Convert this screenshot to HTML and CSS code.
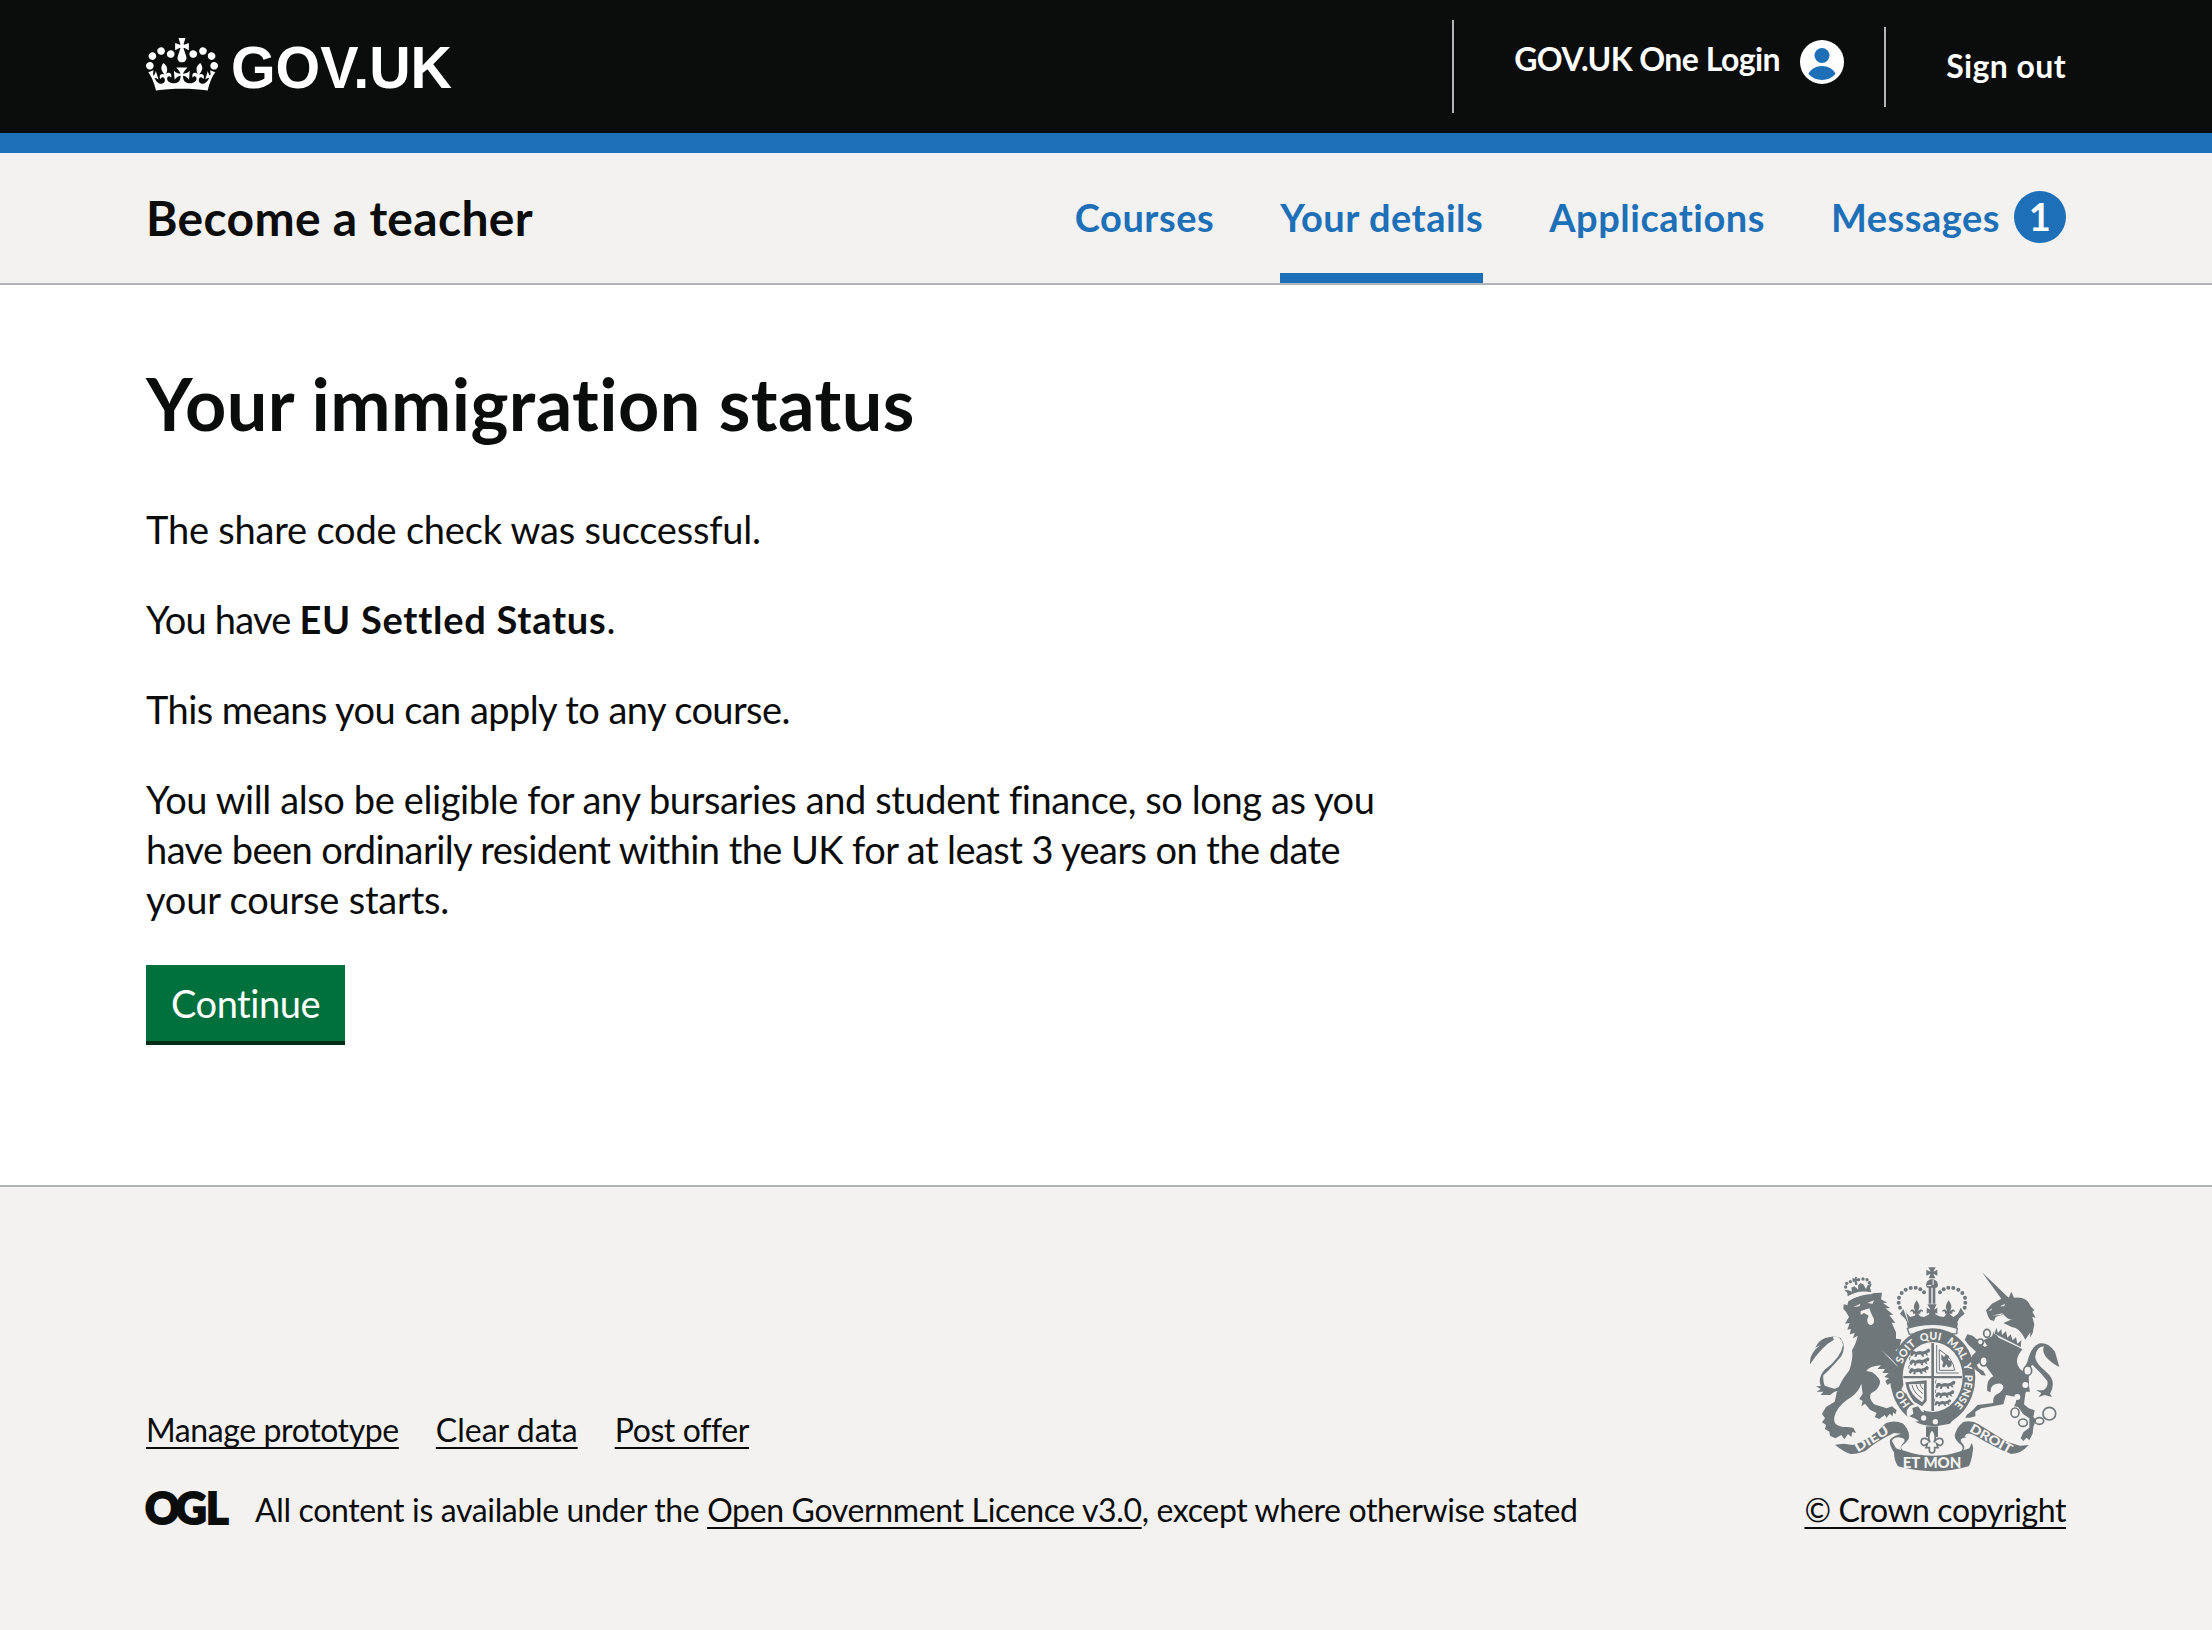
FILE: index.html
```
<!DOCTYPE html>
<html lang="en">
<head>
<meta charset="utf-8">
<title>Your immigration status – Become a teacher</title>
<link rel="stylesheet" href="styles.css">
</head>
<body>
<header class="header">
  <div class="container header-row">
    <a class="logo" href="#" aria-label="GOV.UK">
      <svg class="crown" viewBox="0 0 132 97" aria-hidden="true"><path fill="currentColor" fill-rule="evenodd" d="M25 30.2c3.5 1.5 7.7-.2 9.1-3.7 1.5-3.6-.2-7.8-3.9-9.2-3.6-1.4-7.6.3-9.1 3.9-1.4 3.5.3 7.5 3.9 9zM9 39.5c3.6 1.5 7.8-.2 9.2-3.7 1.5-3.6-.2-7.8-3.9-9.1-3.6-1.5-7.6.2-9.1 3.8-1.4 3.5.3 7.5 3.8 9zM4.4 57.2c3.5 1.5 7.7-.2 9.1-3.8 1.5-3.6-.2-7.7-3.9-9.1-3.5-1.5-7.6.3-9.1 3.8-1.4 3.5.3 7.6 3.9 9.1zm38.3-21.4c3.5 1.5 7.7-.2 9.1-3.8 1.5-3.6-.2-7.7-3.9-9.1-3.6-1.5-7.6.3-9.1 3.8-1.3 3.6.4 7.7 3.9 9.1zm64.4-5.6c-3.6 1.5-7.8-.2-9.1-3.7-1.5-3.6.2-7.8 3.8-9.2 3.6-1.4 7.7.3 9.2 3.9 1.3 3.5-.4 7.5-3.9 9zm15.9 9.3c-3.6 1.5-7.7-.2-9.1-3.7-1.5-3.6.2-7.8 3.7-9.1 3.6-1.5 7.7.2 9.2 3.8 1.5 3.5-.3 7.5-3.8 9zm4.7 17.7c-3.6 1.5-7.8-.2-9.2-3.8-1.5-3.6.2-7.7 3.9-9.1 3.6-1.5 7.7.3 9.2 3.8 1.3 3.5-.4 7.6-3.9 9.1zM89.3 35.8c-3.6 1.5-7.8-.2-9.2-3.8-1.4-3.6.2-7.7 3.9-9.1 3.6-1.5 7.7.3 9.2 3.8 1.4 3.6-.3 7.7-3.9 9.1zM69.7 17.7l8.9 4.7V9.3l-8.9 2.8c-.2-.3-.5-.6-.9-.9L72.4 0H59.6l3.5 11.2c-.3.3-.6.5-.9.9l-8.8-2.8v13.1l8.8-4.7c.3.3.6.7.9.9l-5 15.4v.1c-.2.8-.4 1.6-.4 2.4 0 4.1 3.1 7.5 7 8.1h.2c.3 0 .7.1 1 .1.4 0 .7 0 1-.1h.2c4-.6 7.1-4.1 7.1-8.1 0-.8-.1-1.7-.4-2.4V34l-5.1-15.4c.4-.2.7-.6 1-.9zM66 92.8c16.9 0 32.8 1.1 47.1 3.2 4-16.9 8.9-26.7 14-33.5l-9.6-3.4c1 4.9 1.1 7.2 0 10.2-1.5-1.4-3-4.3-4.2-8.7L108.6 76c2.8-2 5-3.2 7.5-3.3-4.4 9.4-10 11.9-13.6 11.2-4.3-.8-6.3-4.6-5.6-7.9 1-4.7 5.7-5.9 8-.5 4.3-8.7-3-11.4-7.6-8.8 7.1-7.2 7.9-13.5 2.1-21.1-8 6.1-8.1 12.3-4.5 20.8-4.7-5.4-12.1-2.5-9.5 6.2 3.4-5.2 7.9-2 7.2 3.1-.6 4.3-6.4 7.8-13.5 7.2-10.3-.9-10.9-8-11.2-13.8 2.5-.5 7.1 1.8 11 7.3L80.2 60c-4.1 4.4-8 5.3-12.3 5.4 1.4-4.4 8-11.6 8-11.6H55.5s6.4 7.2 7.9 11.6c-4.2-.1-8-1-12.3-5.4l1.4 16.4c3.9-5.5 8.5-7.7 10.9-7.3-.3 5.8-.9 12.8-11.1 13.8-7.2.6-12.9-2.9-13.5-7.2-.7-5 3.8-8.3 7.1-3.1 2.7-8.7-4.6-11.6-9.4-6.2 3.7-8.5 3.6-14.7-4.6-20.8-5.8 7.6-5 13.9 2.2 21.1-4.7-2.6-11.9.1-7.7 8.8 2.3-5.5 7.1-4.2 8.1.5.7 3.3-1.3 7.1-5.7 7.9-3.5.7-9-1.8-13.5-11.2 2.5.1 4.7 1.3 7.5 3.3l-4.7-15.4c-1.2 4.4-2.7 7.2-4.3 8.7-1.1-3-.9-5.3 0-10.2l-9.5 3.4c5 6.9 9.9 16.7 14 33.5 14.8-2.1 30.8-3.2 47.7-3.2z"/></svg>
      <svg class="wordmark" viewBox="0 0 222 53" aria-hidden="true"><text x="-1" y="50" textLength="221" lengthAdjust="spacingAndGlyphs">GOV.UK</text></svg>
    </a>
    <nav class="account" aria-label="Account">
      <a class="one-login" href="#"><span>GOV.UK One Login</span>
        <svg class="avatar" viewBox="0 0 44 44" aria-hidden="true"><circle cx="22" cy="22" r="22" fill="#fff"/><circle cx="22" cy="15.5" r="7.5" fill="#1d70b8"/><path d="M8.4 33.8C11 28.8 16 26 22 26s11 2.800 13.600 7.800C32 38 27.500 40 22 40S12 38 8.400 33.800z" fill="#1d70b8"/></svg>
      </a>
      <a class="sign-out" href="#"><span>Sign out</span></a>
    </nav>
  </div>
</header>
<div class="service">
  <div class="container service-row">
    <a class="service-name" href="#">Become a teacher</a>
    <nav class="service-nav" aria-label="Service">
      <a href="#">Courses</a>
      <a class="current" href="#">Your details</a>
      <a href="#">Applications</a>
      <a href="#">Messages<span class="badge">1</span></a>
    </nav>
  </div>
</div>
<main class="container main">
  <h1>Your immigration status</h1>
  <p class="snug">The share code check was successful.</p>
  <p><span class="tightest">You have </span><strong>EU Settled Status</strong>.</p>
  <p class="tighter">This means you can apply to any course.</p>
  <p><span class="tight">You will also be eligible for any bursaries and student finance, so long as you</span><br><span class="tighter">have been ordinarily resident within the UK for at least 3 years on the date</span><br><span class="snug">your course starts.</span></p>
  <a class="button" href="#">Continue</a>
</main>
<footer class="footer">
  <div class="container footer-row">
    <div class="meta">
      <ul class="links">
        <li><a class="tight" href="#">Manage prototype</a></li>
        <li><a href="#">Clear data</a></li>
        <li><a class="tight" href="#">Post offer</a></li>
      </ul>
      <div class="licence">
        <svg class="ogl" viewBox="0 0 82 34" aria-hidden="true"><text x="-1 29.500 60" y="32.500">OGL</text></svg>
        <span>All content is available under the <a href="#">Open Government Licence v3.0</a>, except where otherwise stated</span>
      </div>
    </div>
    <div class="copyright">
      <svg class="crest" viewBox="60 50 750 615" role="img" aria-label="Royal coat of arms">
        <defs>
          <path id="motto" d="M428 492A97 112 0 0 1 428 268A97 112 0 0 1 428 492"/>
          <g id="fleur"><path d="M0-22C-10-8-10 0-4 10-10 4-20 2-19 14-15 8-10 12-11 18H11C10 12 15 8 19 14 20 2 10 4 4 10 10 0 10-8 0-22z"/></g>
          <g id="beast"><path d="M-30 4q4-12 12-8l6 3q10-6 20-2l10-3 8-6 6 4-2 8-8 2 4 8-6-1-3-4-6 1 2 8-7-1-3-6-12 1-2 7-7-1 3-8-6 1-4 6-6-3z"/><path d="M-30-2q-4-8 2-12" fill="none" stroke="#6f777b" stroke-width="3"/></g>
        </defs>
        <g class="ink">
          <!-- lion: crown, mane and body, tail -->
          <path d="M173 138Q205 118 244 126L240 112 246 100 233 104 228 116 220 102 211 98 204 106 205 118 193 108 184 112 186 124 176 120 163 118 172 128z"/>
          <circle cx="167" cy="110" r="5"/><circle cx="170" cy="99" r="5"/><circle cx="181" cy="94" r="5"/><circle cx="206" cy="88" r="5"/><circle cx="219" cy="86" r="5"/><circle cx="231" cy="88" r="5"/><circle cx="238" cy="97" r="5"/><path d="M187 83l7 2 2-6 5 1-1 6 7 0-1 7-6-2 3 12-7 1-3-11-5 3z"/>
          <path d="M175 153Q215 126 276 127L273 147 292 157 279 158 301 174 287 174 310 194 298 194 316 218 305 217 318 246 318 265 334 267 328 292 316 300 338 318 331 330 342 345 328 352 332 382 322 402 306 396 292 404 286 392 297 384 283 380 296 368 277 368 285 356 262 356 273 345Q235 349 229 362L247 366Q272 384 270 398 265 420 244 428 233 440 252 462L290 474 306 468 320 480 316 492 309 486 308 498 299 490 290 502 284 494 268 506 254 500 260 488 240 478 225 460 214 468 218 452 208 446 218 430 214 400Q206 424 184 440 150 460 138 486 128 508 136 520 150 531 172 530L190 532 198 548 187 545 184 560 174 551 163 567 154 554 136 564 120 556 118 544 105 536 108 524 96 516 105 504 96 490 108 470 134 454Q141 404 178 360 190 325 186 300 200 275 203 256L189 264 194 248 179 252 183 236 172 238 179 218 165 220 177 200 168 184 160 176 161 162 172 165z"/>
          <path d="M152 420Q112 433 93 408 82 382 104 358 154 321 159 283 156 258 127 257L132 268Q97 286 60 342 57 311 90 285L76 292Q86 270 106 263 134 254 152 263 170 288 154 318 116 362 100 375 98 402 111 417 134 421 158 402z"/>
          <path d="M104 406L78 408 92 416 80 424 100 424 92 434 120 434 142 418z"/>
          <!-- unicorn: horn and head, body and tail -->
          <path d="M576 66L645 132 656 142 664 124 672 142Q712 138 722 168L733 180 727 184 737 202 727 200 733 222 728 248 720 262 721 246 706 268Q690 232 665 230L640 218 668 206Q655 212 640 192L617 200 612 212 600 208 594 198 588 180 606 160 634 145z"/>
          <path d="M612 242L626 262 698 296Q668 330 690 356 720 374 716 404L706 430 702 462 716 474 734 480 730 500 738 508 730 530 728 550 718 570 710 562 700 572 692 564 700 546 718 532 718 504 700 492 684 470 672 468Q688 440 666 438L648 434 640 462 574 474 556 484 556 498 540 502 526 502 530 494 548 480 562 464 610 458Q606 436 628 428 650 408 632 400 600 398 602 426L592 422Q588 388 610 378L590 350 578 330 560 344 566 354 580 362 588 376 574 374 566 366 556 358 544 334 546 316 558 304 534 282 524 268 532 252 548 256 562 268 584 290 592 286 580 270 606 258z"/>
          <path d="M706 424Q684 385 712 335 722 288 750 279 774 275 795 304L808 350Q786 340 768 320 755 304 762 288 740 288 736 318 734 336 768 364 802 392 780 430L786 440 764 434 746 440 754 428 738 420 760 420Q776 410 772 392 750 364 730 346 724 338 720 360 712 390 720 424z"/>
          <!-- garter and imperial crown -->
          <ellipse cx="428" cy="380" rx="128" ry="147"/>
          <path d="M358 226L340 176 330 190 346 206 354 222 358 226Q428 206 497 226L508 204 524 190 512 172 504 190 490 200 480 192 474 184 462 200 448 198 436 192 438 178 416 178 418 192 402 200 390 198 380 182 374 196 360 200 350 188 346 176z"/>
          <path d="M350 218Q428 200 504 218L500 240Q428 228 356 240z"/>
          <use href="#fleur" transform="translate(380 172)"/><use href="#fleur" transform="translate(476 172)"/>
          <path d="M412 162H440L432 178 442 172V190L432 184 436 200H416L422 184 410 190V172L422 178zM416 110h8v50h-8zM428 110h8v50h-8zM408 106Q408 88 426 86 444 88 444 106L440 112H412zM415 51H437L430 64 442 58V76L430 70 436 84H416L422 70 409 76V58L422 64z"/>
          <g class="pearl"><circle cx="330" cy="172" r="6"/><circle cx="326" cy="157" r="6"/><circle cx="327" cy="142" r="6"/><circle cx="335" cy="128" r="6"/><circle cx="347" cy="118" r="6"/><circle cx="362" cy="113" r="6"/><circle cx="377" cy="112" r="6"/><circle cx="391" cy="117" r="6"/><circle cx="402" cy="126" r="6"/><circle cx="524" cy="172" r="6"/><circle cx="526" cy="157" r="6"/><circle cx="525" cy="142" r="6"/><circle cx="517" cy="128" r="6"/><circle cx="505" cy="118" r="6"/><circle cx="490" cy="113" r="6"/><circle cx="475" cy="112" r="6"/><circle cx="461" cy="117" r="6"/><circle cx="450" cy="126" r="6"/></g>
          <!-- ribbon -->
          <path d="M135 583L162 580 188 584Q245 566 288 518 314 508 340 520 362 545 356 566L346 578 336 586Q330 590 338 600 428 632 514 602 522 594 514 584 494 570 494 555 500 530 520 515 545 508 566 522L650 574 690 586 716 584Q694 610 664 611 610 590 556 556L546 552Q530 545 524 558 556 580 548 604 545 632 536 648 480 664 428 663 372 662 324 648 312 632 312 606 296 582 300 568 312 554 334 550L312 548Q260 572 226 602 200 612 182 611 160 604 135 583z"/>
          <path d="M408 528H444V560H408z"/>
        </g>
        <g class="paper">
          <ellipse cx="428" cy="380" rx="90" ry="105"/>
          <path d="M352 234Q428 210 502 234L500 250Q484 252 476 246 428 226 380 246 372 252 358 252z" stroke="#6f777b" stroke-width="4"/>
          <circle cx="376" cy="488" r="26"/>
          <path d="M412 104h12v3h-12zM428 88h3v16h-3z"/>
          <path d="M172 145Q205 128 246 126L248 131Q210 132 175 150z"/>
          <path d="M190 170L212 160 208 168zM232 158L252 150 248 160zM212 182L238 174 244 190 252 206Q254 224 240 224 230 220 232 206L236 196 222 188 212 194z"/>
          <path d="M606 174L596 182 604 180zM630 168L646 160 642 168zM606 196L640 188 632 194z"/>
          <path d="M617 224L712 276 700 298 612 250z"/>
          <circle cx="706" cy="404" r="9"/><circle cx="682" cy="440" r="9"/>
          <path d="M306 572Q312 558 334 562 350 566 340 578 328 590 334 600L318 594zM548 572Q542 558 522 562 506 566 516 578 528 590 520 600L538 594z"/>
          <path d="M340 404L352 412 348 430 334 418zM274 300L300 322 326 350 318 344z"/>
        </g>
        <!-- unicorn's chain -->
        <g class="chain"><ellipse cx="591" cy="249" rx="10" ry="12"/><circle cx="571" cy="275" r="9"/><ellipse cx="581" cy="333" rx="11" ry="14"/><ellipse cx="713" cy="361" rx="12" ry="14"/><ellipse cx="675" cy="487" rx="12" ry="14"/><ellipse cx="699" cy="517" rx="13" ry="11"/><ellipse cx="748" cy="512" rx="13" ry="10"/><circle cx="778" cy="490" r="19"/></g>
        <g class="ink">
          <path d="M367 473L384 468 396 484 470 500 500 494 480 520 436 528 396 518 376 505 358 498 370 490z"/>
          <path d="M619 232L624 248 634 236 636 254 648 242 652 262 662 252 668 270 678 260 682 280 694 270 692 290 614 250z"/>
          <path d="M424 278h8v204h-8zM340 377h176v7H340z"/>
          <use href="#beast" transform="translate(390 306) scale(.95)"/><use href="#beast" transform="translate(388 332) scale(.95)"/><use href="#beast" transform="translate(386 358) scale(.95)"/>
          <use href="#beast" transform="translate(466 402) scale(.95)"/><use href="#beast" transform="translate(464 430) scale(.9)"/><use href="#beast" transform="translate(458 456) scale(.8)"/>
          <path d="M346 396L410 390V452L396 468 372 454Q352 430 346 396zM356 402Q360 432 396 456L402 448V400z" fill-rule="evenodd"/>
          <path d="M366 404q4 22 30 40M378 402q2 16 20 28M390 401q2 8 10 16" fill="none" stroke="#6f777b" stroke-width="3"/>
          <path d="M440 284V368H506M448 298V360H494Q490 324 448 298" fill="none" stroke="#6f777b" stroke-width="3"/>
          <path d="M454 312l8 8 6-8 10 6-4 10 12 6-2 14-10 4-4-10-8 10-6-4 4-12-6-8z"/>
        </g>
        <circle class="paper" cx="401" cy="503" r="8"/><circle class="paper" cx="436" cy="514" r="8"/>
        <path d="M426 536Q410 556 420 576 410 560 396 566 388 580 402 586L412 580 408 592 418 592 418 600A8 8 0 1 0 434 600L434 592 444 592 440 580 450 586Q464 580 456 566 442 560 432 576 442 556 426 536z" fill="#f3f2f1" stroke="#6f777b" stroke-width="5"/>
        <g class="words">
          <text><textPath href="#motto" startOffset="11.500%">HO</textPath></text>
          <text><textPath href="#motto" startOffset="31%">SOIT</textPath></text>
          <text><textPath href="#motto" startOffset="44.500%">QUI</textPath></text>
          <text><textPath href="#motto" startOffset="56.500%">MAL</textPath></text>
          <text><textPath href="#motto" startOffset="69%">Y</textPath></text>
          <text><textPath href="#motto" startOffset="74%">PENSE</textPath></text>
          <text transform="translate(203 606) rotate(-31)" textLength="112" lengthAdjust="spacingAndGlyphs" class="side">DIEU</text>
          <text x="338" y="653" textLength="176" lengthAdjust="spacingAndGlyphs" class="large">ET MON</text>
          <text transform="translate(536 543) rotate(29)" textLength="140" lengthAdjust="spacingAndGlyphs" class="side">DROIT</text>
        </g>
      </svg>
      <a class="tight" href="#">© Crown copyright</a>
    </div>
  </div>
</footer>
</body>
</html>
```
FILE: styles.css
```
* { box-sizing: border-box; }
body {
  margin: 0;
  background: linear-gradient(#fff, #fff) 0 285px / 100% 900px no-repeat #f3f2f1;
  color: #0b0c0c;
  font-family: Lato, "Liberation Sans", sans-serif;
  font-size: 38px;
  line-height: 50px;
  font-variant-ligatures: none;
}
a { color: inherit; }
.container { width: 1920px; margin: 0 auto; }

/* Fine tracking for running text */
.snug { letter-spacing: -0.2px; }
.tight { letter-spacing: -0.4px; }
.tighter { letter-spacing: -0.57px; }
.tightest { letter-spacing: -0.8px; }

.header { height: 153px; background: #0b0c0c; border-bottom: 20px solid #1d70b8; color: #fff; }
.header a { text-decoration: none; }
.header-row { display: flex; justify-content: space-between; align-items: flex-start; }
.logo { display: flex; gap: 14px; padding-top: 38px; }
.crown { width: 72px; height: 53px; }
.wordmark { width: 222px; height: 53px; overflow: visible; }
.wordmark text { font: bold 60px "Liberation Sans", sans-serif; fill: #fff; }
.account { display: flex; align-items: flex-start; font-size: 32px; font-weight: 700; }
.one-login { display: flex; gap: 20px; height: 93px; margin-top: 20px; padding: 14px 40px 0 60px; border-left: 2px solid #b1b4b6; letter-spacing: -0.53px; }
.avatar { width: 44px; height: 44px; margin-top: 6px; }
.sign-out { height: 80px; margin-top: 27px; padding: 14px 0 0 60px; border-left: 2px solid #b1b4b6; letter-spacing: 0.4px; }

.service { height: 132px; background: #f3f2f1; border-bottom: 2px solid #b1b4b6; font-weight: 700; }
.service a { text-decoration: none; }
.service-row { display: flex; justify-content: space-between; height: 130px; }
.service-name { font-size: 48px; line-height: 130px; letter-spacing: 0.3px; }
.service-nav { display: flex; gap: 66px; color: #1d70b8; letter-spacing: 0.5px; }
.service-nav a { display: flex; align-items: center; padding-bottom: 2px; }
.service-nav .current { padding: 10px 0 2px; border-bottom: 10px solid #1d70b8; }
.badge { width: 52px; height: 52px; margin-left: 14px; border-radius: 50%; background: #1d70b8; color: #fff; text-align: center; }

.main { height: 900px; padding-top: 78px; }
h1 { margin: 0 0 61px; font-size: 72px; line-height: 80px; font-weight: 700; letter-spacing: 0.43px; }
p { margin: 0 0 40px; }
strong { letter-spacing: 0.74px; }
.button { display: inline-block; height: 76px; margin-top: 1px; padding: 13px 25px; background: #00703c; color: #fff; text-decoration: none; letter-spacing: -0.46px; box-shadow: 0 4px 0 #002d18; }

.footer { border-top: 2px solid #b1b4b6; font-size: 32px; }
.footer-row { display: flex; justify-content: space-between; align-items: flex-end; padding-top: 80px; }
.footer a { text-decoration-thickness: 2px; text-underline-offset: 5px; text-decoration-skip-ink: none; }
.links { display: flex; gap: 37px; margin: 0 0 30px; padding: 0; list-style: none; }
.licence { display: flex; gap: 27px; letter-spacing: -0.35px; }
.ogl { width: 82px; height: 34px; margin-top: 6px; overflow: visible; letter-spacing: 0; }
.ogl text { font: 900 43px Lato, sans-serif; fill: #0b0c0c; stroke: #0b0c0c; stroke-width: 2px; }
.copyright { display: flex; flex-direction: column; align-items: flex-end; gap: 13px; }

.crest { width: 250px; height: 205px; margin-right: 6px; }
.ink { fill: #6f777b; }
.paper { fill: #f3f2f1; }
.chain { fill: #f3f2f1; stroke: #6f777b; stroke-width: 5px; }
.words { fill: #f3f2f1; font: 900 32px Lato, sans-serif; }
.words .side { font-size: 38px; }
.words .large { font-size: 44px; }
```
